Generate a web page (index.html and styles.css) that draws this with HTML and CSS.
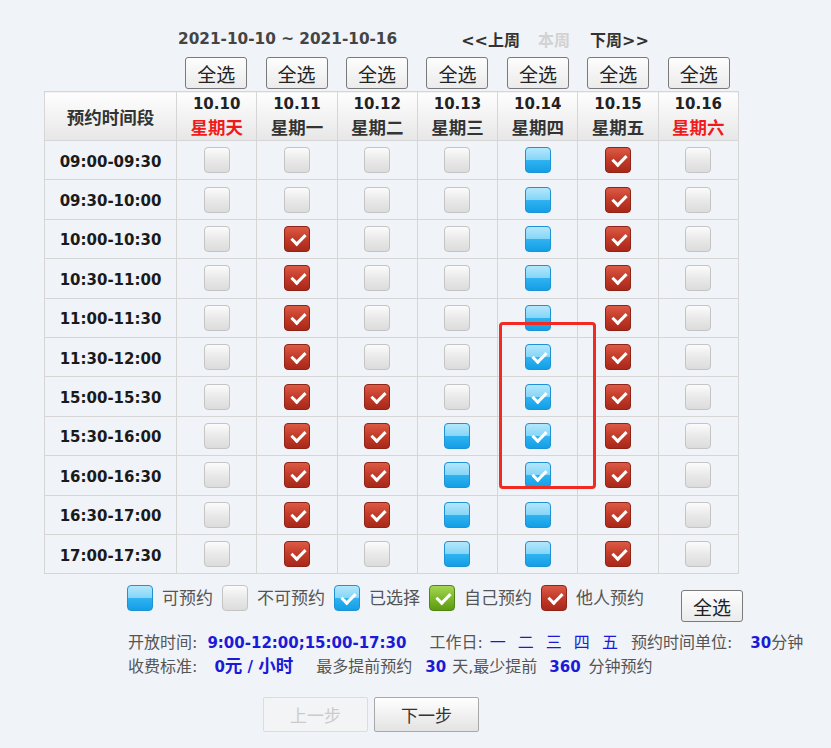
FILE: index.html
```html
<!DOCTYPE html>
<html lang="zh-CN">
  <head>
    <meta charset="UTF-8" />
    <meta name="viewport" content="width=device-width, initial-scale=1.0" />
    <title>预约时间</title>
    <link rel="stylesheet" href="styles.css">
  </head>
  <body>
    <main class="booking">
      <div class="week-nav">
        <span class="range">2021-10-10 ~ 2021-10-16</span>
        <a class="nav-link prev" href="#">&lt;&lt;上周</a>
        <span class="nav-link cur">本周</span>
        <a class="nav-link next" href="#">下周&gt;&gt;</a>
      </div>

      <div class="pick-row">
        <span></span>
        <button class="btn-pick">全选</button>
        <button class="btn-pick">全选</button>
        <button class="btn-pick">全选</button>
        <button class="btn-pick">全选</button>
        <button class="btn-pick">全选</button>
        <button class="btn-pick">全选</button>
        <button class="btn-pick">全选</button>
      </div>

      <div class="grid-wrap">
        <table class="slots">
          <colgroup><col class="c-time"><col span="7"></colgroup>
          <thead>
            <tr>
              <th class="h-time">预约时间段</th>
              <th><span class="md">10.10</span><span class="wd red">星期天</span></th>
              <th><span class="md">10.11</span><span class="wd">星期一</span></th>
              <th><span class="md">10.12</span><span class="wd">星期二</span></th>
              <th><span class="md">10.13</span><span class="wd">星期三</span></th>
              <th><span class="md">10.14</span><span class="wd">星期四</span></th>
              <th><span class="md">10.15</span><span class="wd">星期五</span></th>
              <th><span class="md">10.16</span><span class="wd red">星期六</span></th>
            </tr>
          </thead>
          <tbody>
            <tr>
              <td class="t">09:00-09:30</td>
              <td><i class="cb off"></i></td><td><i class="cb off"></i></td><td><i class="cb off"></i></td><td><i class="cb off"></i></td>
              <td><i class="cb free"></i></td><td><i class="cb taken"></i></td><td><i class="cb off"></i></td>
            </tr>
            <tr>
              <td class="t">09:30-10:00</td>
              <td><i class="cb off"></i></td><td><i class="cb off"></i></td><td><i class="cb off"></i></td><td><i class="cb off"></i></td>
              <td><i class="cb free"></i></td><td><i class="cb taken"></i></td><td><i class="cb off"></i></td>
            </tr>
            <tr>
              <td class="t">10:00-10:30</td>
              <td><i class="cb off"></i></td><td><i class="cb taken"></i></td><td><i class="cb off"></i></td><td><i class="cb off"></i></td>
              <td><i class="cb free"></i></td><td><i class="cb taken"></i></td><td><i class="cb off"></i></td>
            </tr>
            <tr>
              <td class="t">10:30-11:00</td>
              <td><i class="cb off"></i></td><td><i class="cb taken"></i></td><td><i class="cb off"></i></td><td><i class="cb off"></i></td>
              <td><i class="cb free"></i></td><td><i class="cb taken"></i></td><td><i class="cb off"></i></td>
            </tr>
            <tr>
              <td class="t">11:00-11:30</td>
              <td><i class="cb off"></i></td><td><i class="cb taken"></i></td><td><i class="cb off"></i></td><td><i class="cb off"></i></td>
              <td><i class="cb free"></i></td><td><i class="cb taken"></i></td><td><i class="cb off"></i></td>
            </tr>
            <tr>
              <td class="t">11:30-12:00</td>
              <td><i class="cb off"></i></td><td><i class="cb taken"></i></td><td><i class="cb off"></i></td><td><i class="cb off"></i></td>
              <td><i class="cb picked"></i></td><td><i class="cb taken"></i></td><td><i class="cb off"></i></td>
            </tr>
            <tr>
              <td class="t">15:00-15:30</td>
              <td><i class="cb off"></i></td><td><i class="cb taken"></i></td><td><i class="cb taken"></i></td><td><i class="cb off"></i></td>
              <td><i class="cb picked"></i></td><td><i class="cb taken"></i></td><td><i class="cb off"></i></td>
            </tr>
            <tr>
              <td class="t">15:30-16:00</td>
              <td><i class="cb off"></i></td><td><i class="cb taken"></i></td><td><i class="cb taken"></i></td><td><i class="cb free"></i></td>
              <td><i class="cb picked"></i></td><td><i class="cb taken"></i></td><td><i class="cb off"></i></td>
            </tr>
            <tr>
              <td class="t">16:00-16:30</td>
              <td><i class="cb off"></i></td><td><i class="cb taken"></i></td><td><i class="cb taken"></i></td><td><i class="cb free"></i></td>
              <td><i class="cb picked"></i></td><td><i class="cb taken"></i></td><td><i class="cb off"></i></td>
            </tr>
            <tr>
              <td class="t">16:30-17:00</td>
              <td><i class="cb off"></i></td><td><i class="cb taken"></i></td><td><i class="cb taken"></i></td><td><i class="cb free"></i></td>
              <td><i class="cb free"></i></td><td><i class="cb taken"></i></td><td><i class="cb off"></i></td>
            </tr>
            <tr>
              <td class="t">17:00-17:30</td>
              <td><i class="cb off"></i></td><td><i class="cb taken"></i></td><td><i class="cb off"></i></td><td><i class="cb free"></i></td>
              <td><i class="cb free"></i></td><td><i class="cb taken"></i></td><td><i class="cb off"></i></td>
            </tr>
          </tbody>
        </table>
        <div class="mark"></div>
      </div>

      <div class="legend">
        <i class="cb free"></i><span>可预约</span>
        <i class="cb off"></i><span>不可预约</span>
        <i class="cb picked"></i><span>已选择</span>
        <i class="cb mine"></i><span>自己预约</span>
        <i class="cb taken"></i><span>他人预约</span>
        <button class="btn-pick all">全选</button>
      </div>

      <div class="info">
        <p><span>开放时间:</span><b class="ml10">9:00-12:00;15:00-17:30</b><span class="ml23">工作日:</span><span class="days"><em>一</em><em>二</em><em>三</em><em>四</em><em>五</em></span><span class="ml13">预约时间单位:</span><b class="ml18">30</b><span>分钟</span></p>
        <p><span>收费标准:</span><b class="ml17">0<span class="cn">元</span> / <span class="cn">小时</span></b><span class="ml23">最多提前预约</span><b class="ml13">30</b><span class="ml6">天,最少提前</span><b class="ml12">360</b><span class="ml8">分钟预约</span></p>
      </div>

      <div class="steps">
        <button class="btn-step" disabled>上一步</button>
        <button class="btn-step">下一步</button>
      </div>
    </main>
  </body>
</html>
```

FILE: styles.css
```css
* {
  margin: 0;
  padding: 0;
  box-sizing: border-box;
}

body {
  background-color: #f0f3f7;
  color: #333;
  font-family: "DejaVu Sans", "Noto Sans CJK SC", sans-serif;
  font-size: 17.5px;
}

.booking {
  width: 831px;
  padding: 28px 0 0 44px;
}

/* week switch */
.week-nav {
  display: flex;
  align-items: center;
  height: 22px;
  padding-left: 134px;
  font-weight: bold;
}

.range {
  font-size: 15.3px;
  color: #444;
}

.nav-link {
  color: #333;
  text-decoration: none;
  font-size: 16px;
}

.prev {
  margin-left: 64px;
}

.cur {
  margin-left: 18px;
  color: #d2d2d2;
}

.next {
  margin-left: 20px;
}

/* select-all row */
.pick-row {
  display: grid;
  grid-template-columns: 132px repeat(7, 1fr);
  justify-items: center;
  width: 695px;
  margin-top: 7px;
}

.btn-pick {
  width: 62px;
  height: 32px;
  border: 1px solid #7a7a7a;
  border-radius: 3px;
  background: linear-gradient(#fdfdfd, #ebebeb);
  color: #222;
  font-family: inherit;
  font-size: 19px;
}

/* table */
.grid-wrap {
  position: relative;
  width: 695px;
  margin-top: 2px;
}

.slots {
  border-collapse: collapse;
  table-layout: fixed;
  width: 695px;
}

.c-time {
  width: 132px;
}

.slots th,
.slots td {
  border: 1px solid #d6d6d6;
  text-align: center;
  vertical-align: middle;
}

.slots thead th {
  height: 49px;
  background: linear-gradient(#fefefe, #e7e7e7);
  font-weight: bold;
  color: #333;
}

.md {
  display: block;
  font-size: 15px;
  line-height: 25px;
  color: #222;
}

.wd {
  display: block;
  font-size: 17.5px;
  line-height: 23px;
}

.red {
  color: #f01a1a;
}

.slots td {
  height: 39.4px;
}

.slots td.t {
  padding-top: 3px;
  font-size: 15px;
  font-weight: bold;
  color: #1a1a1a;
}

.slots td .cb {
  display: block;
  margin: 0 auto;
}

/* checkbox states */
.cb {
  position: relative;
  display: inline-block;
  width: 26px;
  height: 26px;
  border-radius: 4px;
  border: 1px solid #c4c4c4;
  background: linear-gradient(#fbfbfb, #e9e9e9 50%, #dcdcdc);
}

.cb.free,
.cb.picked {
  border-color: #1f92d6;
  background: linear-gradient(#b4e7fc, #86d6f8 48%, #2fb2f0 52%, #139fe6);
}

.cb.taken {
  border-color: #8e2418;
  background: linear-gradient(#dc5b45, #c23a28 50%, #a9281a);
}

.cb.mine {
  border-color: #4f860f;
  background: linear-gradient(#a6d654, #7cb92a 50%, #5e9a12);
}

.cb.picked::after,
.cb.taken::after,
.cb.mine::after {
  content: "";
  position: absolute;
  left: 9px;
  top: 4px;
  width: 6px;
  height: 11px;
  border: solid #fff;
  border-width: 0 3px 3px 0;
  transform: rotate(45deg);
}

.mark {
  position: absolute;
  left: 455px;
  top: 231px;
  width: 97px;
  height: 167px;
  border: 3px solid #f22a22;
  border-radius: 4px;
}

/* legend */
.legend {
  display: flex;
  align-items: flex-start;
  gap: 9px;
  margin-top: 11px;
  padding-left: 83px;
  color: #555;
  font-size: 17px;
  line-height: 26px;
}

.legend .all {
  margin: 5px 0 0 28px;
}

/* info lines */
.info {
  margin-top: 9px;
  padding-left: 84px;
  font-size: 16px;
  line-height: 23px;
  color: #555;
}

.info b {
  font-size: 15px;
  color: #1a1ad8;
}

.info .cn {
  font-size: 17.5px;
}

.ml6 {
  margin-left: 6px;
}

.ml8 {
  margin-left: 8px;
}

.ml10 {
  margin-left: 10px;
}

.ml12 {
  margin-left: 12px;
}

.ml13 {
  margin-left: 13px;
}

.ml17 {
  margin-left: 17px;
}

.ml18 {
  margin-left: 18px;
}

.ml23 {
  margin-left: 23px;
}

.days em {
  font-style: normal;
  color: #1a1ad8;
  margin-left: 12px;
}

.days em:first-child {
  margin-left: 7px;
}

/* steps */
.steps {
  display: flex;
  gap: 6px;
  margin-top: 18px;
  padding-left: 219px;
}

.btn-step {
  width: 105px;
  height: 35px;
  border: 1px solid #a8a8a8;
  border-radius: 2px;
  background: linear-gradient(#ffffff, #e3e3e3);
  color: #333;
  font-family: inherit;
  font-size: 17px;
}

.btn-step:disabled {
  border-color: #dcdcdc;
  background: #f3f4f6;
  color: #cbcbcb;
}
```
